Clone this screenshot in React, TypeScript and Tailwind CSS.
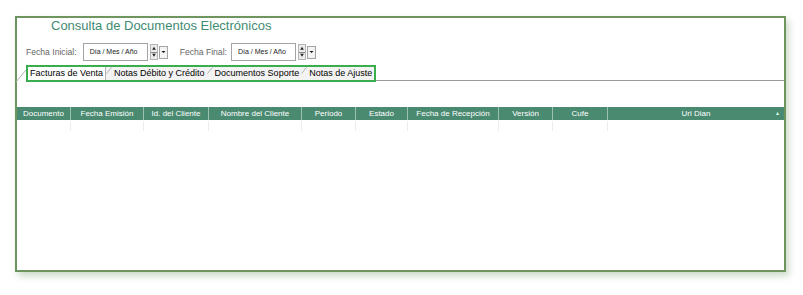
import React from 'react';

const columns = [
  { label: 'Documento', cls: 'w-[53px]' },
  { label: 'Fecha Emisión', cls: 'w-[73px]' },
  { label: 'Id. del Cliente', cls: 'w-[65px]' },
  { label: 'Nombre del Cliente', cls: 'w-[93px]' },
  { label: 'Periodo', cls: 'w-[54px]' },
  { label: 'Estado', cls: 'w-[52px]' },
  { label: 'Fecha de Recepción', cls: 'w-[91px]' },
  { label: 'Versión', cls: 'w-[54px]' },
  { label: 'Cufe', cls: 'w-[55px]' },
  { label: 'Url Dian', cls: 'flex-1' },
];

const tabs = ['Facturas de Venta', 'Notas Débito y Crédito', 'Documentos Soporte', 'Notas de Ajuste'];

function DateField() {
  return (
    <div className="flex items-center h-[18px]">
      <div className="w-[65px] h-[18px] border border-[#a4a4a4] bg-white flex items-center pl-[6px] text-[7px] text-[#222]">
        Día / Mes / Año
      </div>
      {/* spinner */}
      <div className="ml-[2px] w-[8px] h-[16px] flex flex-col border border-[#b5b5b5] bg-[#ececec]">
        <svg width="6" height="7" viewBox="0 0 6 7" className="block">
          <path d="M1 5 L3 2 L5 5 Z" fill="#222" />
        </svg>
        <div className="h-px bg-[#888]" />
        <svg width="6" height="7" viewBox="0 0 6 7" className="block">
          <path d="M1 2 L3 5 L5 2 Z" fill="#222" />
        </svg>
      </div>
      {/* dropdown */}
      <div className="ml-px w-[9px] h-[13px] border border-[#a4a4a4] bg-[#f4f4f4] flex items-center justify-center">
        <svg width="5" height="4" viewBox="0 0 5 4">
          <path d="M0.5 1 L2.5 3 L4.5 1 Z" fill="#111" />
        </svg>
      </div>
    </div>
  );
}

function Slash({ h = 8 }: { h?: number }) {
  return (
    <svg width="6" height={h} viewBox={`0 0 6 ${h}`} className="block shrink-0">
      <line x1="0.5" y1={h - 0.5} x2="5.5" y2="0.5" stroke="#b0b0b0" strokeWidth="1" />
    </svg>
  );
}

export default function App() {
  return (
    <div className="w-[803px] h-[295px] bg-white pt-[16px] pl-[15px] font-['Liberation_Sans',Arial,sans-serif]">
      <div className="w-[771px] h-[256px] border-2 border-[#6f955f] bg-white shadow-[3px_4px_7px_rgba(110,150,100,0.35)]">
        {/* Title */}
        <div className="pl-[34px] text-[13px] leading-[16px] text-[#3f8b72]">
          Consulta de Documentos Electrónicos
        </div>

        {/* Date filters */}
        <div className="mt-[9px] pl-[9px] flex items-center text-[8.6px] text-[#666]">
          <span className="mr-[6px]">Fecha Inicial:</span>
          <DateField />
          <span className="ml-[12px] mr-[4px]">Fecha Final:</span>
          <DateField />
        </div>

        {/* Tabs */}
        <div className="mt-[5px] flex items-end h-[16px]">
          <svg width="10" height="13" viewBox="0 0 10 13" className="block shrink-0 ml-[-1px]">
            <line x1="0" y1="13" x2="10" y2="1" stroke="#b0b0b0" strokeWidth="1" />
          </svg>
          <div className="flex h-[17px] border-2 border-[#3aae4c]">
            {tabs.map((t, i) => (
              <div
                key={t}
                className={
                  i === 0
                    ? 'flex items-center px-[2px] bg-white border-r border-[#b0b0b0] text-[9px] text-black'
                    : 'flex items-start pr-[2px] bg-[#f3f3f3] text-[9px] text-black'
                }
              >
                {i > 0 && <Slash h={7} />}
                <span className={i > 0 ? 'self-center ml-[2px]' : ''}>{t}</span>
              </div>
            ))}
          </div>
          <div className="flex-1 h-px bg-[#9a9a9a] mb-[1px]" />
        </div>

        {/* Grid header */}
        <div className="mt-[25px] flex h-[13px] bg-[#4a8a71] text-[8px] text-white">
          {columns.map((c, i) => (
            <div
              key={c.label}
              className={`${c.cls} relative flex items-center justify-center ${i > 0 ? 'border-l border-[#9cc2b3]' : ''}`}
            >
              {c.label}
              {i === columns.length - 1 && (
                <span className="absolute right-[5px] top-[3px] text-[6px] leading-[6px] text-[#dfe]">▴</span>
              )}
            </div>
          ))}
        </div>
        <div className="flex h-[10px] mt-px">
          {columns.map((c, i) => (
            <div key={c.label} className={`${c.cls} ${i > 0 ? 'border-l border-[#ececec]' : ''}`} />
          ))}
        </div>
      </div>
    </div>
  );
}
